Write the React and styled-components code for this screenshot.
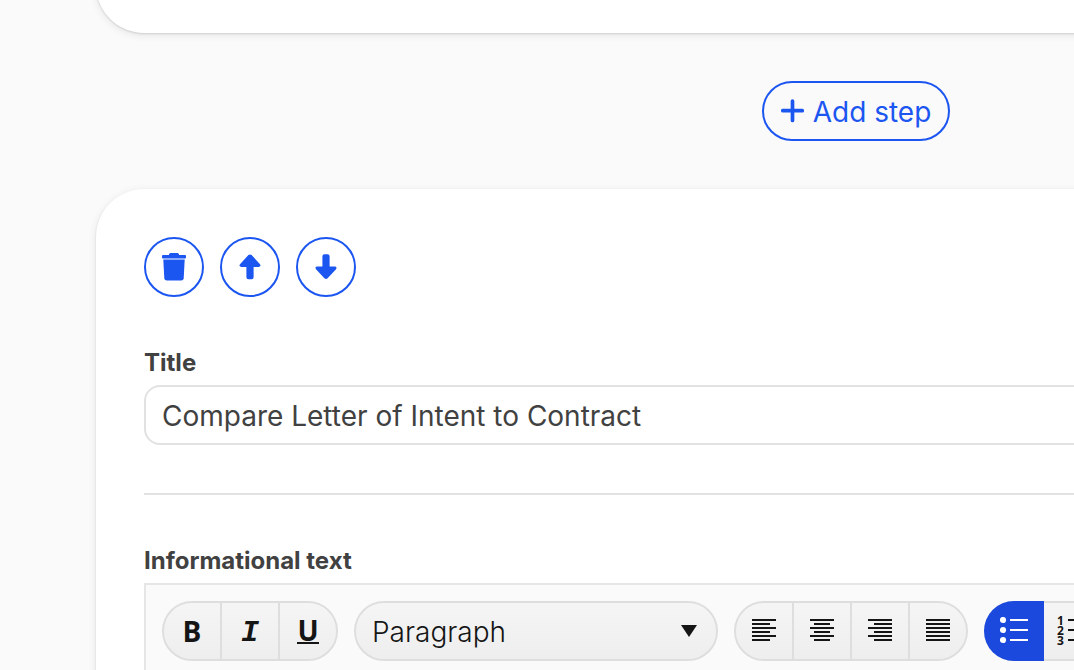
import React from "react";
import styled, { createGlobalStyle, css } from "styled-components";

const blue = "#1c56f1";

const GlobalStyle = createGlobalStyle`
  *, *::before, *::after { box-sizing: border-box; }
  body {
    margin: 0;
    background: #fafafa;
    color: #414141;
    font-family: Inter, "Open Sans", sans-serif;
    overflow-x: hidden;
  }
  button, input, select { font: inherit; color: inherit; margin: 0; }
`;

const Page = styled.main`
  min-height: 100vh;
  max-height: 100vh;
  overflow: hidden;
`;

const Steps = styled.div`
  min-width: 1712px;
  padding: 0 96px;
  display: flex;
  flex-direction: column;
  align-items: stretch;
  gap: 48px;
`;

const Card = styled.section`
  background: #fff;
  border-radius: 48px;
  padding: 48px;
  box-shadow: 0 2px 8px rgba(0, 0, 0, 0.09), 0 1px 2px rgba(0, 0, 0, 0.12);
`;

const PreviousCard = styled(Card)`
  margin-top: -63px;
`;

const AddButton = styled.button`
  align-self: center;
  display: flex;
  align-items: center;
  justify-content: center;
  gap: 8px;
  min-width: 188px;
  height: 60px;
  padding: 0 16px;
  border: 2px solid ${blue};
  border-radius: 30px;
  background: transparent;
  color: ${blue};
  font-size: 28px;
  line-height: 40px;
  white-space: nowrap;
`;

const AddLabel = styled.span`
  padding-top: 2px;
`;

const Actions = styled.div`
  display: flex;
  gap: 16px;
  margin-bottom: 48px;
`;

const RoundButton = styled.button`
  display: grid;
  place-items: center;
  width: 60px;
  height: 60px;
  padding: 0;
  border: 2px solid ${blue};
  border-radius: 50%;
  background: transparent;
  color: ${blue};
`;

const Field = styled.div`
  display: flex;
  flex-direction: column;
  gap: 4px;
`;

const Label = styled.label`
  font-size: 24px;
  line-height: 36px;
  font-weight: 700;
`;

const TextInput = styled.input`
  width: 100%;
  height: 60px;
  padding: 2px 16px 0;
  border: 2px solid #e2e2e2;
  border-radius: 16px;
  background: #fff;
  font-size: 28px;
`;

const Divider = styled.hr`
  height: 2px;
  margin: 48px 0;
  border: 0;
  background: #e2e2e2;
`;

const Editor = styled.div`
  border: 2px solid #e6e6e6;
  background: #fafafa;
`;

const Toolbar = styled.div`
  display: flex;
  gap: 16px;
  padding: 16px;
`;

const pill = css`
  height: 60px;
  border: 2px solid #dedede;
  border-radius: 30px;
  background: linear-gradient(#f5f5f5, #eeeeee) padding-box;
  color: #151515;
`;

const Group = styled.div`
  ${pill}
  display: flex;
`;

const Tool = styled.button`
  display: grid;
  place-items: center;
  width: ${(p) => (p.$active ? 60 : 58)}px;
  padding: 0;
  border: 0;
  border-right: 2px solid #dedede;
  background: transparent;
  color: inherit;

  &:last-child { width: 56px; border-right: 0; }

  ${(p) =>
    p.$active &&
    css`
      && {
        margin: -2px 0 -2px -2px;
        border: 0;
        border-radius: 30px 0 0 30px;
        background: #1b49dd;
        color: #fff;
      }
    `}
`;

const Bold = styled.span`
  font-family: "Open Sans", sans-serif;
  font-weight: 700;
  font-size: 28px;
  line-height: 32px;
`;

const Italic = styled.span`
  padding-top: 4px;
  font-family: "Liberation Mono", monospace;
  font-style: italic;
  font-weight: 700;
  font-size: 30px;
  line-height: 32px;
`;

const Underlined = styled.span`
  font-family: "Open Sans", sans-serif;
  font-weight: 700;
  font-size: 28px;
  line-height: 24px;
  border-bottom: 2px solid currentColor;
`;

const SelectBox = styled.div`
  display: grid;
  align-items: center;
  width: 364px;
  & > * { grid-area: 1 / 1; }
`;

const Select = styled.select`
  ${pill}
  appearance: none;
  width: 100%;
  padding: 2px 48px 0 16px;
  font-size: 28px;
  font-weight: 300;
`;

const Caret = styled.svg`
  justify-self: end;
  margin-right: 21px;
  color: #151515;
  pointer-events: none;
`;

const PlusIcon = () => (
  <svg width="24" height="24" viewBox="0 0 24 24" stroke="currentColor" strokeWidth="3.7" strokeLinecap="round" aria-hidden="true">
    <path d="M11.500 2v19.500M1.800 11.700h19.500" />
  </svg>
);

const TrashIcon = () => (
  <svg width="24" height="28" viewBox="0 0 24 28" fill="currentColor" aria-hidden="true">
    <path d="M8.6 0h6.8q1 0 1.4 1l.3.9H23q1 0 1 1v1.6q0 1-1 1H1q-1 0-1-1V2.900q0-1 1-1h5.900l.3-.9q.4-1 1.400-1z" />
    <path d="M1.300 6.600h21.400l-1 18.600q-.2 2.400-2.600 2.400H4.900q-2.400 0-2.600-2.400z" />
  </svg>
);

const ArrowIcon = ({ down }) => (
  <svg width="24" height="26" viewBox="0 0 24 26" fill="currentColor" aria-hidden="true">
    <path
      d={
        down
          ? "M10.400 .2h3.200q2 0 2 2v10.300h5.200q2.900 .4 1 3L13.600 24.300q-1.600 1.400-3.200 0L2.200 15.500q-1.900-2.600 1-3h5.200V2.200q0-2 2-2z"
          : "M10.400 25.200h3.200q2 0 2-2V12.900h5.200q2.900-.4 1-3L13.600 1.100q-1.600-1.400-3.200 0L2.200 9.900q-1.900 2.600 1 3h5.200v10.300q0 2 2 2z"
      }
    />
  </svg>
);

const shortLine = { left: [0, 18], center: [4, 16], right: [6, 18], justify: [0, 24] };

const AlignIcon = ({ side }) => {
  const [x, width] = shortLine[side];
  return (
    <svg width="24" height="24" fill="currentColor" shapeRendering="crispEdges" aria-hidden="true">
      {[0, 8, 16].map((y) => (
        <React.Fragment key={y}>
          <rect y={y} width="24" height="2" />
          <rect x={x} y={y + 4} width={width} height="2" />
        </React.Fragment>
      ))}
    </svg>
  );
};

const BulletIcon = () => (
  <svg width="28" height="28" fill="currentColor" aria-hidden="true">
    {[3, 13, 23].map((y) => (
      <React.Fragment key={y}>
        <circle cx="3" cy={y} r="3.1" />
        <rect x="10" y={y - 1} width="18" height="2" />
      </React.Fragment>
    ))}
  </svg>
);

const NumberIcon = () => (
  <svg width="30" height="30" overflow="visible" fill="currentColor" fontFamily="Open Sans" fontWeight="700" fontSize="12" aria-hidden="true">
    {[4, 14, 24].map((y, i) => (
      <React.Fragment key={y}>
        <text x="0" y={y + 5}>{i + 1}</text>
        <rect x="11" y={y - 1} width="18" height="2" />
      </React.Fragment>
    ))}
  </svg>
);

export default function App() {
  return (
    <>
      <GlobalStyle />
      <Page>
        <Steps>
          <PreviousCard />
          <AddButton type="button">
            <PlusIcon />
            <AddLabel>Add step</AddLabel>
          </AddButton>
          <Card>
            <Actions>
              <RoundButton type="button" aria-label="Delete step"><TrashIcon /></RoundButton>
              <RoundButton type="button" aria-label="Move step up"><ArrowIcon /></RoundButton>
              <RoundButton type="button" aria-label="Move step down"><ArrowIcon down /></RoundButton>
            </Actions>
            <Field>
              <Label htmlFor="title">Title</Label>
              <TextInput id="title" type="text" defaultValue="Compare Letter of Intent to Contract" />
            </Field>
            <Divider />
            <Field>
              <Label htmlFor="format">Informational text</Label>
              <Editor>
                <Toolbar role="toolbar">
                  <Group>
                    <Tool type="button" aria-label="Bold"><Bold>B</Bold></Tool>
                    <Tool type="button" aria-label="Italic"><Italic>I</Italic></Tool>
                    <Tool type="button" aria-label="Underline"><Underlined>U</Underlined></Tool>
                  </Group>
                  <SelectBox>
                    <Select id="format" defaultValue="Paragraph">
                      <option>Paragraph</option>
                    </Select>
                    <Caret width="16" height="12" viewBox="0 0 16 12" fill="currentColor" aria-hidden="true">
                      <path d="M0 0h16L8 12z" />
                    </Caret>
                  </SelectBox>
                  <Group>
                    {["left", "center", "right", "justify"].map((side) => (
                      <Tool key={side} type="button" aria-label={`Align ${side}`}><AlignIcon side={side} /></Tool>
                    ))}
                  </Group>
                  <Group>
                    <Tool type="button" $active aria-label="Bulleted list"><BulletIcon /></Tool>
                    <Tool type="button" aria-label="Numbered list"><NumberIcon /></Tool>
                  </Group>
                </Toolbar>
              </Editor>
            </Field>
          </Card>
        </Steps>
      </Page>
    </>
  );
}
